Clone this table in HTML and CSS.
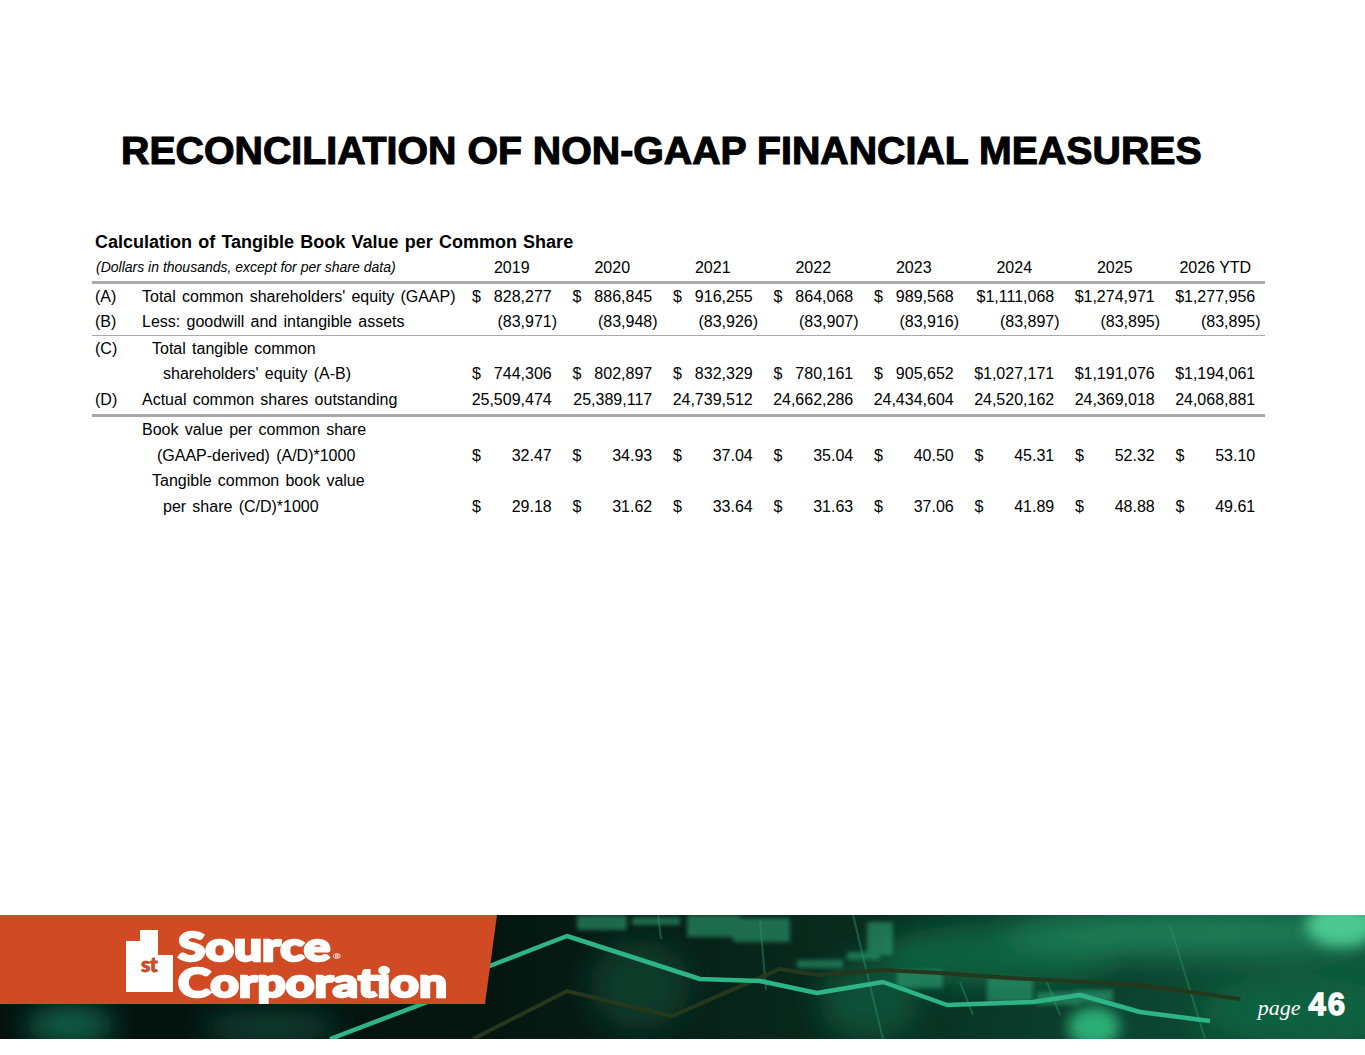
FILE: index.html
```html
<!DOCTYPE html>
<html lang="en">
<head>
<meta charset="utf-8">
<title>Reconciliation of Non-GAAP Financial Measures</title>
<link rel="stylesheet" href="styles.css">
</head>
<body>
<div class="slide">
  <h1 class="title">RECONCILIATION OF NON-GAAP FINANCIAL MEASURES</h1>

  <section class="calc">
    <div class="calc-title">Calculation of Tangible Book Value per Common Share</div>

    <div class="row head">
      <div class="note">(Dollars in thousands, except for per share data)</div>
      <div class="yr">2019</div><div class="yr">2020</div><div class="yr">2021</div><div class="yr">2022</div>
      <div class="yr">2023</div><div class="yr">2024</div><div class="yr">2025</div><div class="yr">2026 YTD</div>
    </div>

    <div class="row">
      <div class="key">(A)</div>
      <div class="label">Total common shareholders' equity (GAAP)</div>
      <div class="val"><span>$</span><span class="pos">828,277</span></div>
      <div class="val"><span>$</span><span class="pos">886,845</span></div>
      <div class="val"><span>$</span><span class="pos">916,255</span></div>
      <div class="val"><span>$</span><span class="pos">864,068</span></div>
      <div class="val"><span>$</span><span class="pos">989,568</span></div>
      <div class="val solo"><span class="pos">$1,111,068</span></div>
      <div class="val solo"><span class="pos">$1,274,971</span></div>
      <div class="val solo"><span class="pos">$1,277,956</span></div>
    </div>

    <div class="row rule-thin">
      <div class="key">(B)</div>
      <div class="label">Less: goodwill and intangible assets</div>
      <div class="val solo"><span>(83,971)</span></div>
      <div class="val solo"><span>(83,948)</span></div>
      <div class="val solo"><span>(83,926)</span></div>
      <div class="val solo"><span>(83,907)</span></div>
      <div class="val solo"><span>(83,916)</span></div>
      <div class="val solo"><span>(83,897)</span></div>
      <div class="val solo"><span>(83,895)</span></div>
      <div class="val solo"><span>(83,895)</span></div>
    </div>

    <div class="row">
      <div class="key">(C)</div>
      <div class="label ind1">Total tangible common</div>
    </div>
    <div class="row">
      <div class="key"></div>
      <div class="label ind2">shareholders' equity (A-B)</div>
      <div class="val"><span>$</span><span class="pos">744,306</span></div>
      <div class="val"><span>$</span><span class="pos">802,897</span></div>
      <div class="val"><span>$</span><span class="pos">832,329</span></div>
      <div class="val"><span>$</span><span class="pos">780,161</span></div>
      <div class="val"><span>$</span><span class="pos">905,652</span></div>
      <div class="val solo"><span class="pos">$1,027,171</span></div>
      <div class="val solo"><span class="pos">$1,191,076</span></div>
      <div class="val solo"><span class="pos">$1,194,061</span></div>
    </div>

    <div class="row rule-thick">
      <div class="key">(D)</div>
      <div class="label">Actual common shares outstanding</div>
      <div class="val solo"><span class="pos">25,509,474</span></div>
      <div class="val solo"><span class="pos">25,389,117</span></div>
      <div class="val solo"><span class="pos">24,739,512</span></div>
      <div class="val solo"><span class="pos">24,662,286</span></div>
      <div class="val solo"><span class="pos">24,434,604</span></div>
      <div class="val solo"><span class="pos">24,520,162</span></div>
      <div class="val solo"><span class="pos">24,369,018</span></div>
      <div class="val solo"><span class="pos">24,068,881</span></div>
    </div>

    <div class="row">
      <div class="key"></div>
      <div class="label">Book value per common share</div>
    </div>
    <div class="row">
      <div class="key"></div>
      <div class="label ind-g">(GAAP-derived) (A/D)*1000</div>
      <div class="val"><span>$</span><span class="pos">32.47</span></div>
      <div class="val"><span>$</span><span class="pos">34.93</span></div>
      <div class="val"><span>$</span><span class="pos">37.04</span></div>
      <div class="val"><span>$</span><span class="pos">35.04</span></div>
      <div class="val"><span>$</span><span class="pos">40.50</span></div>
      <div class="val"><span>$</span><span class="pos">45.31</span></div>
      <div class="val"><span>$</span><span class="pos">52.32</span></div>
      <div class="val"><span>$</span><span class="pos">53.10</span></div>
    </div>
    <div class="row">
      <div class="key"></div>
      <div class="label ind1">Tangible common book value</div>
    </div>
    <div class="row">
      <div class="key"></div>
      <div class="label ind2">per share (C/D)*1000</div>
      <div class="val"><span>$</span><span class="pos">29.18</span></div>
      <div class="val"><span>$</span><span class="pos">31.62</span></div>
      <div class="val"><span>$</span><span class="pos">33.64</span></div>
      <div class="val"><span>$</span><span class="pos">31.63</span></div>
      <div class="val"><span>$</span><span class="pos">37.06</span></div>
      <div class="val"><span>$</span><span class="pos">41.89</span></div>
      <div class="val"><span>$</span><span class="pos">48.88</span></div>
      <div class="val"><span>$</span><span class="pos">49.61</span></div>
    </div>
  </section>

  <footer class="footer">
    <svg class="footer-art" viewBox="0 0 1365 124" width="1365" height="124" aria-hidden="true">
      <defs>
        <linearGradient id="bg" x1="0" y1="0" x2="1" y2="0">
          <stop offset="0" stop-color="#04110c"/>
          <stop offset="0.35" stop-color="#051510"/>
          <stop offset="0.6" stop-color="#08291d"/>
          <stop offset="0.82" stop-color="#0c4230"/>
          <stop offset="1" stop-color="#0f573d"/>
        </linearGradient>
        <filter id="b16" x="-50%" y="-50%" width="200%" height="200%"><feGaussianBlur stdDeviation="14"/></filter>
        <filter id="b8" x="-50%" y="-50%" width="200%" height="200%"><feGaussianBlur stdDeviation="7"/></filter>
        <filter id="b2" x="-20%" y="-20%" width="140%" height="140%"><feGaussianBlur stdDeviation="2"/></filter>
      </defs>
      <rect width="1365" height="124" fill="url(#bg)"/>
      <g filter="url(#b16)">
        <ellipse cx="70" cy="110" rx="45" ry="20" fill="#11604a"/>
        <ellipse cx="270" cy="112" rx="70" ry="16" fill="#0c4032"/>
        <ellipse cx="640" cy="70" rx="50" ry="45" fill="#0b3a2a"/>
        <ellipse cx="870" cy="85" rx="50" ry="40" fill="#0e5039"/>
        <ellipse cx="1000" cy="40" rx="120" ry="32" fill="#10603f"/>
        <ellipse cx="1190" cy="18" rx="190" ry="24" fill="#1a7a55"/>
        <ellipse cx="1300" cy="95" rx="100" ry="32" fill="#11623f"/>
      </g>
      <g filter="url(#b8)">
        <ellipse cx="1342" cy="10" rx="36" ry="22" fill="#4cc891"/>
        <ellipse cx="1094" cy="112" rx="26" ry="20" fill="#2bae76"/>
      </g>
      <g fill="#2f9d72" opacity="0.6" filter="url(#b2)">
        <rect x="577" y="0" width="50" height="15"/>
        <rect x="632" y="2" width="48" height="8"/>
        <rect x="687" y="0" width="53" height="22"/>
        <rect x="733" y="3" width="57" height="24"/>
        <rect x="797" y="45" width="46" height="8"/>
        <rect x="847" y="37" width="33" height="8"/>
        <rect x="867" y="7" width="26" height="33"/>
        <rect x="897" y="55" width="46" height="18"/>
        <rect x="987" y="63" width="46" height="24"/>
        <rect x="1037" y="77" width="43" height="13"/>
        <rect x="1073" y="75" width="40" height="12"/>
      </g>
      <g stroke="#2a8a63" stroke-width="2" opacity="0.5">
        <line x1="658" y1="0" x2="661" y2="24"/>
        <line x1="760" y1="5" x2="766" y2="75"/>
        <line x1="853" y1="0" x2="883" y2="124"/>
        <line x1="960" y1="67" x2="973" y2="100"/>
        <line x1="1047" y1="67" x2="1060" y2="100"/>
        <line x1="1170" y1="10" x2="1205" y2="124"/>
      </g>
      <polyline points="473,124 567,76 672,101 780,54 817,60 883,55 940,58 1010,63 1140,70 1240,84" fill="none" stroke="#26381b" stroke-width="4"/>
      <polyline points="330,124 430,86 487,52 567,21 700,64 760,66 817,78 883,67 947,90 1033,87 1080,80 1140,97 1210,106" fill="none" stroke="#2db487" stroke-width="4.5" stroke-linejoin="round"/>
    </svg>

    <div class="brand">
      <svg class="mark" viewBox="0 0 50 62" width="50" height="62" aria-hidden="true">
        <path d="M14 0 H32 V25 H47 V62 H0 V11 H14 Z" fill="#fff"/>
        <text x="15" y="42" class="mark-st">st</text>
      </svg>
      <div class="wordmark">
        <span class="wm-line">Source<span class="reg">®</span></span>
        <span class="wm-line">Corporation</span>
      </div>
    </div>

    <div class="page-no"><span class="page-word">page</span><span class="page-num">46</span></div>
  </footer>
</div>
</body>
</html>
```
FILE: styles.css
```css
* { box-sizing: border-box; }

body {
  margin: 0;
  background: #fff;
  color: #000;
  font-family: "Liberation Sans", Arial, sans-serif;
}

.slide {
  width: 1365px;
  height: 1055px;
  display: flex;
  flex-direction: column;
  overflow: hidden;
}

.title {
  margin: 128px 0 0 121px;
  font-size: 39.3px;
  line-height: 44px;
  font-weight: 700;
  -webkit-text-stroke: 1.1px #000;
  white-space: nowrap;
}

.calc {
  margin: 59px 0 0 92px;
}

.calc-title {
  font-size: 18px;
  font-weight: 700;
  line-height: 22px;
  padding-left: 3px;
  word-spacing: 1.2px;
}

.row {
  display: grid;
  grid-template-columns: 50px 324px repeat(8, 100.5px);
  width: 1173px;
  font-size: 16px;
  line-height: 25.5px;
  white-space: nowrap;
}

.head {
  margin-top: 2px;
  border-bottom: 3px solid #a9a9a9;
}

.note {
  grid-column: 1 / 3;
  font-style: italic;
  font-size: 14px;
  padding-left: 4px;
}

.yr {
  text-align: center;
  padding-right: 9px;
}

.key { padding-left: 3px; }

.label { padding-left: 0; word-spacing: 1.8px; }
.ind1 { padding-left: 10px; }
.ind2 { padding-left: 21px; }
.ind-g { padding-left: 15px; }

.val {
  display: flex;
  justify-content: space-between;
  padding: 0 9.5px 0 6px;
}

.val.solo { justify-content: flex-end; }

.pos { padding-right: 5.3px; }

.rule-thin { border-bottom: 1.5px solid #aaa; }
.rule-thick { border-bottom: 3px solid #a9a9a9; padding-bottom: 2px; }

/* footer */
.footer {
  margin-top: auto;
  margin-bottom: 16px;
  height: 124px;
  position: relative;
  display: flex;
  align-items: flex-start;
}

.footer-art {
  position: absolute;
  left: 0;
  top: 0;
  width: 100%;
  height: 100%;
  display: block;
}

.brand {
  position: relative;
  width: 497px;
  height: 89px;
  background: #d04a24;
  clip-path: polygon(0 0, 100% 0, 485px 100%, 0 100%);
  display: flex;
  align-items: flex-start;
  gap: 2px;
  padding: 15px 0 0 126px;
}

.mark { display: block; flex: none; }

.mark-st {
  font-family: "Lato", "Liberation Sans", sans-serif;
  font-weight: 900;
  font-size: 21px;
  letter-spacing: -0.5px;
  fill: #d04a24;
  stroke: #d04a24;
  stroke-width: 0.8px;
}

.wordmark {
  display: flex;
  flex-direction: column;
  margin-top: 2.5px;
  font-family: "Lato", "Liberation Sans", sans-serif;
  font-weight: 900;
  font-size: 40px;
  line-height: 26px;
  color: #fff;
  -webkit-text-stroke: 2.4px #fff;
  transform: scaleX(1.24);
  transform-origin: left top;
  white-space: nowrap;
}

.reg {
  font-size: 8px;
  font-weight: 700;
  margin-left: 2px;
  vertical-align: 2px;
  -webkit-text-stroke: 0;
}

.page-no {
  position: relative;
  margin: 75px 18px 0 auto;
  display: flex;
  align-items: baseline;
  gap: 8px;
  color: #fff;
}

.page-word {
  font-family: "Liberation Serif", "Times New Roman", serif;
  font-style: italic;
  font-size: 22px;
}

.page-num {
  font-family: "Liberation Sans", Arial, sans-serif;
  font-weight: 700;
  font-size: 31px;
  line-height: 30px;
  letter-spacing: 2px;
  -webkit-text-stroke: 1.4px #fff;
}
```
